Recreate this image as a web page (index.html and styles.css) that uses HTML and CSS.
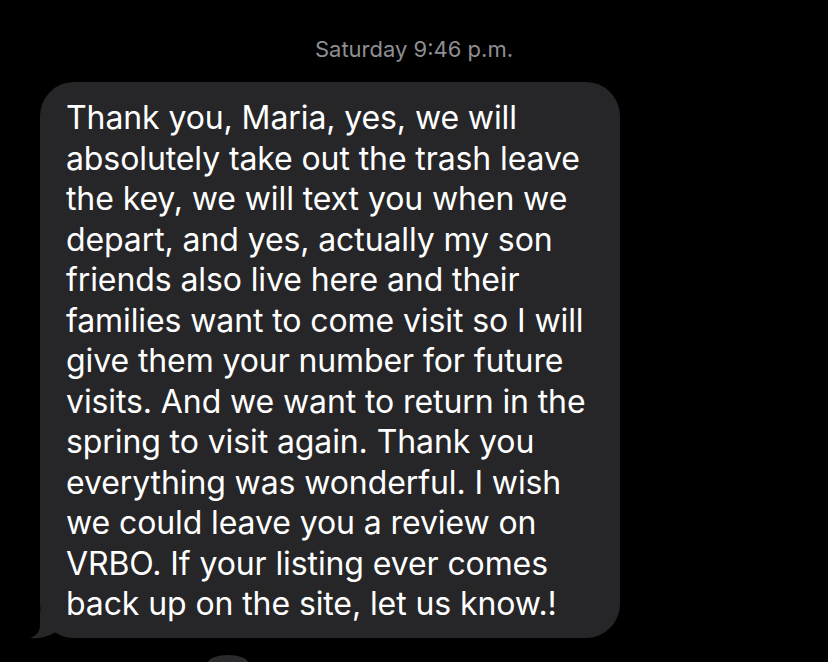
FILE: index.html
```html
<!DOCTYPE html>
<html>
<head>
<meta charset="utf-8">
<link rel="stylesheet" href="styles.css">
</head>
<body>
<div class="screen">
  <div class="stamp"><span class="day">Saturday</span> 9:46 p.m.</div>
  <div class="row">
    <div class="bubble">
      <p class="msg">Thank you, Maria, yes, we will<br>absolutely take out the trash leave<br>the key, we will text you when we<br>depart, and yes, actually my son<br>friends also live here and their<br>families want to come visit so I will<br>give them your number for future<br>visits. And we want to return in the<br>spring to visit again. Thank you<br>everything was wonderful. I wish<br>we could leave you a review on<br>VRBO. If your listing ever comes<br>back up on the site, let us know.!</p>
      <svg class="tail" width="40" height="30" viewBox="0 0 40 30"><path d="M10 0 L10 14 C10 21 6 25 0 27 C9 28 17 26 24 22 C27 21 31 20.5 34 20.5 L34 0 Z" fill="#262628"/></svg>
    </div>
  </div>
  <div class="next"></div>
</div>
</body>
</html>
```
FILE: styles.css
```css
html, body {
  margin: 0;
  padding: 0;
  background: #000;
}
.screen {
  width: 828px;
  height: 662px;
  overflow: hidden;
  background: #000;
  display: flex;
  flex-direction: column;
  font-family: Inter, "Liberation Sans", sans-serif;
}
.stamp {
  flex-shrink: 0;
  box-sizing: border-box;
  text-align: center;
  color: #8e8e93;
  font-size: 22px;
  padding-top: 36px;
  line-height: 26px;
  height: 82px;
}
.row {
  flex-shrink: 0;
  display: flex;
  padding-left: 40px;
}
.bubble {
  position: relative;
  width: 580px;
  height: 556px;
  box-sizing: border-box;
  background: #262628;
  border-radius: 34px;
  padding: 16px 0 0 26px;
}
.msg {
  margin: 0;
  color: #fff;
  font-size: 32px;
  line-height: 40.5px;
  white-space: nowrap;
  letter-spacing: -0.1px;
}
.tail {
  position: absolute;
  left: -10px;
  bottom: -3px;
}
.next {
  flex-shrink: 0;
  margin: 17px 0 0 208px;
  width: 40px;
  height: 16px;
  border-radius: 50%;
  background: #2a2a2c;
}
```
